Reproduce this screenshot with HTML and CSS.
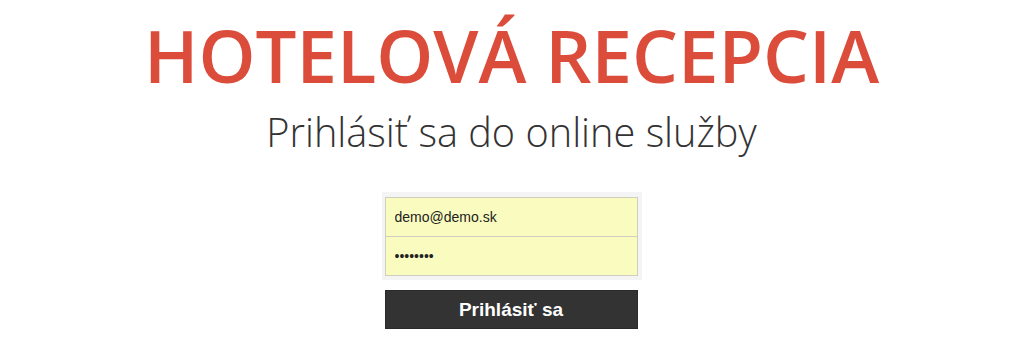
FILE: index.html
```html
<!DOCTYPE html>
<html lang="sk">
<head>
<meta charset="utf-8">
<title>Hotelová recepcia</title>
<link rel="stylesheet" href="styles.css">
</head>
<body>
<main class="page">
  <h1 class="title">HOTELOVÁ RECEPCIA</h1>
  <p class="subtitle">Prihlásiť sa do online služby</p>
  <form class="login">
    <div class="fields">
      <input class="field" type="text" value="demo@demo.sk">
      <input class="field field-pass" type="password" value="demodemo">
    </div>
    <button class="submit" type="button">Prihlásiť sa</button>
  </form>
</main>
</body>
</html>
```
FILE: styles.css
```css
html, body {
  margin: 0;
  padding: 0;
  background: #ffffff;
}
.page {
  font-family: "Open Sans", "Liberation Sans", sans-serif;
  display: flex;
  flex-direction: column;
  align-items: center;
}
.title {
  margin: 10px 0 0;
  font-size: 72.5px;
  line-height: 90px;
  font-weight: 600;
  color: #dc4c3a;
  text-align: center;
}
.subtitle {
  margin: 7px 0 0;
  font-size: 39.7px;
  line-height: 50px;
  font-weight: 300;
  color: #333333;
  text-align: center;
}
.login {
  margin-top: 35px;
  width: 260px;
  display: flex;
  flex-direction: column;
  align-items: center;
}
.fields {
  box-sizing: border-box;
  width: 260px;
  padding: 5px 4px 4px 3px;
  background: #f4f4f4;
  display: flex;
  flex-direction: column;
}
.field {
  box-sizing: border-box;
  width: 253px;
  height: 40px;
  margin: 0;
  padding: 0 9px;
  border: 1px solid #cfcfbf;
  background: #fafcbf;
  font-family: "Liberation Sans", Arial, sans-serif;
  font-size: 14px;
  color: #222222;
  outline: none;
}
.field-pass {
  margin-top: -1px;
}
.submit {
  margin: 10px 0 0 -1px;
  box-sizing: border-box;
  width: 253px;
  height: 39px;
  border: 1px solid #2a2a2a;
  background: #333333;
  color: #ffffff;
  font-family: "Liberation Sans", Arial, sans-serif;
  font-size: 19px;
  font-weight: 700;
  padding: 0;
}
```
